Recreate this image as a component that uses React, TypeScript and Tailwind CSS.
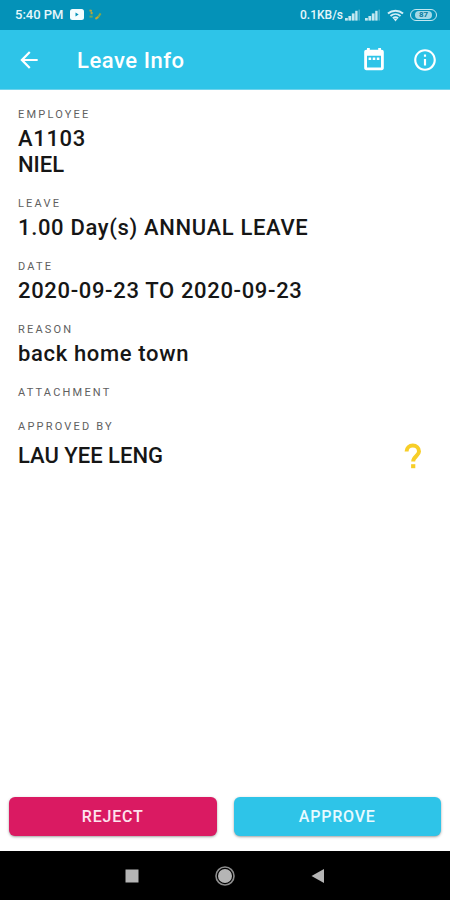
import type { ReactNode } from "react";
import { MdArrowBack, MdInfoOutline } from "react-icons/md";

/* Signal strength bars, the last one is dimmed */
function SignalIcon() {
  return (
    <svg width="16" height="12" viewBox="0 0 16 12" fill="#c4e8f1" aria-hidden="true">
      <rect x="0" y="9" width="2.8" height="2.6" />
      <rect x="3.4" y="7" width="2.8" height="4.6" />
      <rect x="6.8" y="4.4" width="2.8" height="7.2" />
      <rect x="10.2" y="1.8" width="2.4" height="9.8" />
      <rect x="13.4" y="0.6" width="1.6" height="11" opacity="0.35" />
    </svg>
  );
}

function WifiIcon() {
  return (
    <svg width="17" height="13" viewBox="0 0 18 13" fill="none" stroke="#d4eff7" strokeWidth="2" aria-hidden="true">
      <path d="M1 4.4C5.5 0.4 12.5 0.4 17 4.4" />
      <path d="M3.7 7.1C6.8 4.4 11.2 4.4 14.3 7.1" />
      <path d="M6.2 9.4C7.9 8 10.1 8 11.8 9.4" />
      <path d="M6.8 10h4.4L9 12.8z" fill="#d4eff7" stroke="none" />
    </svg>
  );
}

function StatusBar() {
  return (
    <div className="flex h-[30px] shrink-0 items-center justify-between bg-[#0492b8] pr-[13px] pl-[15px] text-xs font-medium text-[#e6f7fb]">
      <div className="flex items-center">
        <span className="text-[13px]">5:40 PM</span>
        <svg className="ml-1.5" width="14" height="11" viewBox="0 0 14 11" aria-hidden="true">
          <rect width="14" height="11" rx="2.5" fill="#f4fcfe" />
          <path d="M5.5 3.4v4.2l3.2-2.1z" fill="#0492b8" />
        </svg>
        <svg className="ml-1" width="15" height="12" viewBox="0 0 15 12" fill="none" strokeWidth="2" aria-hidden="true">
          <path d="M1.5 1.4l2.4.6M3.6 3v2.2" stroke="#b8a63c" />
          <path d="M1.5 7.6h3.2" stroke="#6fa85a" />
          <path d="M7.4 9.8l3-2" stroke="#c7a82f" />
          <path d="M10.4 7.8l2.2-3.4" stroke="#86a74b" />
        </svg>
      </div>
      <div className="flex items-center">
        <span>0.1KB/s</span>
        <span className="ml-0.5"><SignalIcon /></span>
        <span className="ml-1"><SignalIcon /></span>
        <span className="ml-1.5"><WifiIcon /></span>
        <span className="ml-1.5 flex h-3 w-[27px] items-center justify-center rounded-full border border-[#c4e8f1]">
          <span className="flex h-2 w-[17px] items-center justify-center rounded-sm bg-[#a3d9e7] text-[8px] leading-none font-bold text-[#08799a]">
            87
          </span>
        </span>
      </div>
    </div>
  );
}

function Header() {
  return (
    <header className="flex h-[60px] shrink-0 items-center border-b border-[#6fd3ec] bg-[#2ec4e8] pr-3 pl-4 text-white">
      <button type="button" aria-label="Back">
        <MdArrowBack size={26} />
      </button>
      <h1 className="ml-[35px] flex-1 pt-0.5 text-[22px] leading-7 font-medium tracking-wide">Leave Info</h1>
      <button type="button" aria-label="Calendar" className="mr-[27px]">
        <svg width="22" height="23" viewBox="0 0 22 23" fill="currentColor">
          <path
            fillRule="evenodd"
            d="M4 0h2.8v1.8h8.4V0H18v1.8h.6c1.3 0 2.2.9 2.2 2.2v16c0 1.3-.9 2.2-2.2 2.2H3.4c-1.3 0-2.2-.9-2.2-2.2V4c0-1.3.9-2.2 2.2-2.2H4zM4 7.8v11.8h14V7.8z"
          />
          <path d="M5.6 9.4h2.6v2.5H5.6zM9.7 9.4h2.6v2.5H9.7zM13.8 9.4h2.6v2.5h-2.6z" />
        </svg>
      </button>
      <button type="button" aria-label="Information">
        <MdInfoOutline size={26} />
      </button>
    </header>
  );
}

function Field({ label, children }: { label: string; children?: ReactNode }) {
  return (
    <div>
      <dt className="text-[11px] leading-4 tracking-[0.2em] text-[#606060]">{label}</dt>
      {children}
    </div>
  );
}

function Value({ children }: { children: ReactNode }) {
  return (
    <dd className="text-[22px] leading-[26px] font-medium tracking-[0.03em] text-[#161616]">{children}</dd>
  );
}

/* Names are set without the extra tracking */
function Name({ children }: { children: ReactNode }) {
  return <dd className="text-[22px] leading-[26px] font-medium text-[#161616]">{children}</dd>;
}

function LeaveDetails() {
  return (
    <main className="flex-1 px-[18px] pt-[17px]">
      <dl className="flex flex-col gap-[18px]">
        <Field label="EMPLOYEE">
          <div className="pt-[3px]">
            <Value>A1103</Value>
            <Name>NIEL</Name>
          </div>
        </Field>
        <Field label="LEAVE">
          <div className="pt-[3px]"><Value>1.00 Day(s) ANNUAL LEAVE</Value></div>
        </Field>
        <Field label="DATE">
          <div className="pt-[3px]"><Value>2020-09-23 TO 2020-09-23</Value></div>
        </Field>
        <Field label="REASON">
          <div className="pt-[3px]"><Value>back home town</Value></div>
        </Field>
        <Field label="ATTACHMENT" />
        <Field label="APPROVED BY">
          <div className="flex items-center justify-between pt-2 pr-2.5">
            <Name>LAU YEE LENG</Name>
            <dd>
              <svg width="18" height="26" viewBox="0 0 18 26" role="img" aria-label="Pending">
                <path
                  d="M2.6 8.6C2.6 5 5.4 2.6 8.8 2.6s6.2 2.4 6.2 5.8c0 4.4-5.8 4.8-5.8 10.2"
                  fill="none"
                  stroke="#f7ce28"
                  strokeWidth="4"
                />
                <rect x="7.1" y="21.2" width="4.2" height="4" fill="#f7ce28" />
              </svg>
            </dd>
          </div>
        </Field>
      </dl>
    </main>
  );
}

function ActionBar() {
  return (
    <div className="flex shrink-0 gap-[17px] px-[9px] pb-[15px]">
      <button
        type="button"
        className="h-[39px] flex-1 rounded-md bg-[#da1a62] pt-px text-base font-medium tracking-wider text-[#fde4ee] shadow-sm shadow-black/30"
      >
        REJECT
      </button>
      <button
        type="button"
        className="h-[39px] flex-1 rounded-md bg-[#2ec4e8] pt-px text-base font-medium tracking-wider text-[#e8faff] shadow-sm shadow-black/30"
      >
        APPROVE
      </button>
    </div>
  );
}

function NavigationBar() {
  return (
    <nav className="flex h-[49px] shrink-0 items-center justify-center gap-[73px] bg-black text-[#b5b5b5]">
      <button type="button" aria-label="Recent apps">
        <svg width="20" height="20" viewBox="0 0 20 20" fill="currentColor">
          <rect x="3.5" y="3.5" width="13" height="13" />
        </svg>
      </button>
      <button type="button" aria-label="Home">
        <svg width="20" height="20" viewBox="0 0 20 20">
          <circle cx="10" cy="10" r="9" fill="none" stroke="#8d8d8d" strokeWidth="1.6" />
          <circle cx="10" cy="10" r="7" fill="currentColor" />
        </svg>
      </button>
      <button type="button" aria-label="Go back">
        <svg width="20" height="20" viewBox="0 0 20 20" fill="currentColor">
          <path d="M3.5 10L16 3v14z" />
        </svg>
      </button>
    </nav>
  );
}

export default function App() {
  return (
    <div className="flex min-h-screen flex-col bg-white font-[Roboto,sans-serif]">
      <StatusBar />
      <Header />
      <LeaveDetails />
      <ActionBar />
      <NavigationBar />
    </div>
  );
}
